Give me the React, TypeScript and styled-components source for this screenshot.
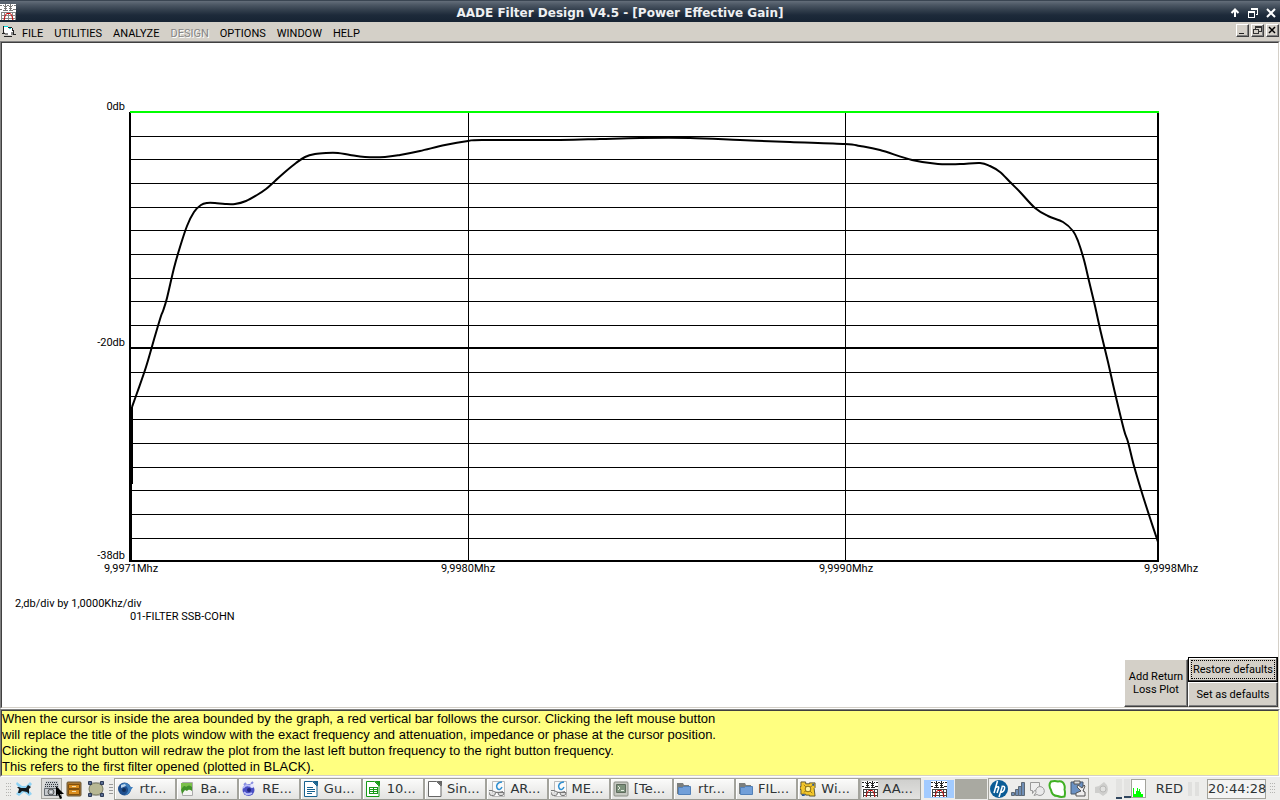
import React from 'react';
import styled, { createGlobalStyle, css } from 'styled-components';

const Global = createGlobalStyle`
  *, *::before, *::after { box-sizing: border-box; }
  html, body { margin: 0; padding: 0; }
  body { background: #d4d0c8; color: #000; font-family: Roboto, "Liberation Sans", sans-serif; font-size: 11px; line-height: 13px; }
  button { font: inherit; color: inherit; margin: 0; padding: 0; border: 0; background: none; border-radius: 0; }
  svg { display: block; flex: none; }
`;

const Desktop = styled.div`
  display: flex;
  flex-direction: column;
  min-height: 100vh;
`;

const TitleBar = styled.header`
  display: grid;
  grid-template-columns: 16px 1fr 56px;
  align-items: center;
  height: 22px;
  border-top: 1px solid #3a4552;
  background: linear-gradient(#646e7a 0, #4b5663 4px, #333f4d 9px, #1d2a3a 14px, #172434 20px);
`;

const Title = styled.h1`
  margin: 0;
  padding-top: 3px;
  text-align: center;
  font: bold 12px/16px "DejaVu Sans", sans-serif;
  color: #eef0f2;
  white-space: nowrap;
  overflow: hidden;
`;

const FrameControls = styled.div`
  display: flex;
  justify-content: flex-end;
  gap: 2px;
  padding: 2px 1px 0 0;
`;

const FrameButton = styled.button`
  display: grid;
  place-items: center;
  width: 16px;
  height: 16px;
`;

const MenuBar = styled.nav`
  display: flex;
  align-items: center;
  height: 19px;
  padding-left: 2px;
  background: #d4d0c8;
`;

const MenuList = styled.div`
  display: flex;
  flex: 1;
  gap: 11px;
  padding: 4px 0 0 5px;
`;

const MenuButton = styled.button`
  white-space: nowrap;
  &:disabled {
    color: #868686;
    text-shadow: 1px 1px #fff;
  }
`;

const ChildControls = styled.div`
  display: flex;
  gap: 2px;
  padding: 0 1px 2px 0;
`;

const raised = css`
  background: #d4d0c8;
  border: 1px solid;
  border-color: #fff #404040 #404040 #fff;
  box-shadow: inset -1px -1px #808080;
`;

const ChildButton = styled.button`
  ${raised}
  display: grid;
  place-items: center;
  width: 13px;
  height: 13px;
`;

const Sunken = styled.section`
  border: 1px solid;
  border-color: #808080 #fff #fff #808080;
`;

const PlotFrame = styled(Sunken)`
  display: flex;
  flex: 1;
`;

const PlotPane = styled.div`
  display: flex;
  flex-direction: column;
  justify-content: space-between;
  flex: 1;
  min-width: 0;
  border: 1px solid;
  border-color: #404040 #d4d0c8 #d4d0c8 #404040;
  background: #fff;
`;

const Chart = styled.svg`
  width: 100%;
  height: auto;
  font-family: Roboto, "Liberation Sans", sans-serif;
  font-size: 11px;
`;

const PlotActions = styled.div`
  display: flex;
  justify-content: flex-end;
  align-items: flex-end;
`;

const ActionStack = styled.div`
  display: flex;
  flex-direction: column;
  width: 90px;
`;

const ActionButton = styled.button<{ $wide?: boolean; $focused?: boolean }>`
  ${raised}
  display: grid;
  place-items: center;
  width: ${p => (p.$wide ? 'auto' : '64px')};
  height: ${p => (p.$wide ? 25 : 48)}px;
  ${p => p.$focused && css`
    border-color: #000;
    box-shadow: inset -1px -1px #404040, inset 1px 1px #fff;
    outline: 1px dotted #000;
    outline-offset: -4px;
  `}
`;

const Hint = styled.p`
  margin: 0;
  min-height: 66px;
  border: 1px solid;
  border-color: #404040 #d4d0c8 #d4d0c8 #404040;
  background: #ffff80;
  font: 13px/16px "Liberation Sans", sans-serif;
`;

const HintLine = styled.span`
  display: block;
`;

const Taskbar = styled.footer`
  display: flex;
  align-items: center;
  height: 23px;
  background: #ededeb;
  font: 13px/16px "DejaVu Sans", sans-serif;
  color: #2e3436;
`;

const Launchers = styled.div`
  display: flex;
  align-items: center;
  gap: 2px;
  width: 114px;
  padding-left: 6px;
`;

const Launcher = styled.button<{ $active?: boolean }>`
  display: grid;
  place-items: center;
  width: 21px;
  height: 21px;
  background: ${p => (p.$active ? '#dcdcda' : 'transparent')};
  box-shadow: ${p => (p.$active ? 'inset 0 0 0 1px #a5a5a0' : 'none')};
`;

const LaunchPair = styled.div`
  position: relative;
  margin-left: 5px;
`;

const Pointer = styled.svg`
  position: absolute;
  left: 15px;
  top: 8px;
  z-index: 1;
`;

const Tasks = styled.div`
  display: grid;
  grid-template-columns: repeat(13, 1fr);
  flex: 1;
  min-width: 0;
`;

const Task = styled.button<{ $active?: boolean }>`
  display: flex;
  align-items: center;
  gap: 2px;
  min-width: 0;
  height: 22px;
  padding: 0 4px 0 2px;
  overflow: hidden;
  white-space: nowrap;
  border: 1px solid;
  border-color: #a3a39c #a3a39c #999992 #a3a39c;
  box-shadow: inset 1px 1px ${p => (p.$active ? '#bcbcb8' : '#fff')};
  background: ${p => (p.$active ? 'linear-gradient(#cfcfcd, #e2e2e0)' : 'linear-gradient(#fbfbfa, #e3e3e1)')};
`;

const TaskLabel = styled.span`
  flex: 1;
  text-align: center;
`;

const Pager = styled.div`
  display: flex;
  height: 18px;
  margin: 0 0 0 2px;
`;

const Desk = styled.button<{ $current?: boolean }>`
  display: grid;
  place-items: center;
  width: 32px;
  height: 20px;
  margin-top: -1px;
  border: 1px solid ${p => (p.$current ? '#ededeb' : '#a9a9a1')};
  background: ${p => (p.$current ? '#a2cbff' : '#a9a9a1')};
`;

const Tray = styled.div`
  display: flex;
  align-items: center;
  gap: 2px;
  width: 101px;
  height: 22px;
  margin-left: 1px;
  padding-left: 1px;
  border: 1px solid #a3a39c;
`;

const Monitors = styled.div`
  display: flex;
  align-items: center;
  gap: 6px;
  padding-left: 5px;
`;

const KeyLabel = styled.span`
  padding: 0 4px 0 10px;
`;

const Clock = styled.time`
  display: grid;
  place-items: center;
  width: 59px;
  height: 20px;
  border: 1px solid #a3a39c;
  background: #f4f4f3;
  white-space: nowrap;
`;

/* Shared small drawings */

const FilterIcon = ({ faded }: { faded?: boolean }) => (
  <svg width="16" height="16" viewBox="0 0 16 16" shapeRendering="crispEdges" aria-hidden="true">
    <path fill="#fff" d="M0 0h16v16H0z" />
    <path
      stroke={faded ? '#777' : '#222'}
      fill="none"
      d="M0 1.500h2M3 1.500h1M7 1.500h2M12 1.500h1M14 1.500h2M5.500 0v7M10.500 0v7M4 2.500h3M9 2.500h3M4 4.500h3M9 4.500h3M0 5.500h2M13 5.500h3M3 6.500h5M9 6.500h4"
    />
    <path stroke={faded ? '#888' : '#444'} fill="none" d="M1 8.500h15M1 11.500h15M1 14.500h15M1.500 8v8M4.500 8v8M8.500 8v8M12.500 8v8M15.500 8v8" />
    <path stroke="#d00000" fill="none" shapeRendering="auto" d="M4 16c1-3 1-6 3-6.500h3c2 .5 2 3.500 3 6.500" />
  </svg>
);

const PageIcon = ({ color, mark }: { color: string; mark?: string }) => (
  <svg width="16" height="16" viewBox="0 0 16 16" aria-hidden="true">
    <path d="M1.500 .5h8L14 5v10.500H1.500z" fill="#fff" stroke={color} />
    <path d="M9.500 0H15v5.500z" fill={color} />
    {mark && <path d={mark} stroke={color} strokeWidth="1" fill="none" shapeRendering="crispEdges" />}
  </svg>
);

const FolderIcon = () => (
  <svg width="16" height="16" viewBox="0 0 16 16" aria-hidden="true">
    <path d="M1 13V2h6l1 2h5v8z" fill="#7b7e7d" />
    <path d="M2.500 6.500h4l1-1h7v8h-12z" fill="#729fd8" stroke="#5280b8" />
  </svg>
);

const ReaderIcon = () => (
  <svg width="16" height="16" viewBox="0 0 16 16" aria-hidden="true">
    <path d="M3.500 .5h12v15h-12z" fill="#fafafa" stroke="#bbb" />
    <path d="M13 1c-5 0-6 4-5 6 2 3 4 1 5-1" fill="none" stroke="#2f8fd0" strokeWidth="1.500" />
    <path d="M0 9.500h3l4 2h3l4-1M.5 11.500v1q0 2 2 2h2q2 0 2-3M9 11.500q0 3 2 3h2q2 0 2-3z" fill="#ddd" stroke="#777" />
  </svg>
);

const RtrIcon = () => (
  <svg width="16" height="16" viewBox="0 0 16 16" aria-hidden="true">
    <circle cx="7.500" cy="8" r="6.500" fill="#1f4f8e" />
    <path d="M3 4q6-4 9 0l1 2 3 0-2 3q-2 5-6 5 5-4 2-8-3-3-7-2z" fill="#3f7fbd" />
    <path d="M4 4l4-1 1 2-5 2z" fill="#bcd6ee" />
    <circle cx="7" cy="9" r="2" fill="#12305a" />
  </svg>
);

const ImageIcon = () => (
  <svg width="16" height="16" viewBox="0 0 16 16" aria-hidden="true">
    <path d="M3.500 1.500h10v13h-10z" fill="#f4f4f2" stroke="#aaa" />
    <path d="M2 2h11v7H2z" fill="#7cc04c" />
    <path d="M2 9q3-6 5-3 3-3 6 0v4l-3-2-2 2-2-1-3 4z" fill="#42932a" />
  </svg>
);

const RadioactiveIcon = () => (
  <svg width="16" height="16" viewBox="0 0 16 16" aria-hidden="true">
    <circle cx="7.500" cy="9" r="6" fill="#4a4fc4" />
    <path d="M2 7q3-4 7-2M3 11q3 4 8 1" stroke="#b9befa" strokeWidth="2" fill="none" />
    <path d="M3 4l2-2M10 3l2-2" stroke="#8a8fe0" strokeWidth="2" />
    <circle cx="8" cy="9" r="2" fill="#20247e" />
    <circle cx="11" cy="5" r="2" fill="#e4e6ff" />
  </svg>
);

const TerminalIcon = () => (
  <svg width="16" height="16" viewBox="0 0 16 16" aria-hidden="true">
    <rect x="1" y="1" width="14" height="14" rx="1" fill="#c7c9c2" stroke="#8a8d85" />
    <path d="M3.500 3.500h9v8h-9z" fill="#7d927c" stroke="#5e6b5c" />
    <path d="M5 5l2 2-2 2M8 9.500h3" fill="none" stroke="#e8f0e2" />
  </svg>
);

const WineIcon = () => (
  <svg width="16" height="16" viewBox="0 0 17 17" aria-hidden="true">
    <path d="M1 1h5v2h4V2l6 0v5l-1 1 1 8h-6v-1H6v-1H1V9H0V6h1z" fill="#f4c72b" stroke="#5a5330" />
    <path d="M4 4l3 3M13 5l-3 2M4 12l3-2M13 13l-3-3" stroke="#9c7a12" />
    <circle cx="8.500" cy="8.500" r="3" fill="#fff2a0" stroke="#7c6410" />
    <path d="M2 15h3M14 3v2" stroke="#29579b" strokeWidth="2" />
  </svg>
);

const Grip = ({ rows }: { rows?: boolean }) => (
  <svg width="6" height="14" viewBox="0 0 6 14" shapeRendering="crispEdges" aria-hidden="true">
    <path
      d={rows ? 'M1 2.500h4M1 5.500h4M1 8.500h4M1 11.500h4' : 'M0 1.500h6M0 4.500h6M0 7.500h6M0 10.500h6M0 13.500h6'}
      stroke={rows ? '#999' : '#b5b5b2'}
      strokeDasharray={rows ? undefined : '1 1'}
    />
  </svg>
);

/* Plot data */

type Point = [number, number];

const GRID_ROWS = [136, 159, 183, 207, 230, 254, 278, 301, 325, 372, 396, 419, 443, 467, 490, 514, 538];
const GRID_COLUMNS = [468, 845];
const RESPONSE: Point[] = [
  [132, 407], [137, 393], [146, 367], [155, 336], [161, 316], [163, 311], [167, 298], [174, 268],
  [180, 247], [187, 226], [194, 212], [201, 205], [207, 203], [215, 203], [225, 204], [235, 204],
  [246, 201], [257, 195], [266, 189], [275, 181], [285, 172], [296, 163], [305, 157],
  [315, 154], [326, 153], [338, 153], [350, 155], [365, 157], [385, 157], [400, 155], [420, 151], [445, 145],
  [468, 141], [482, 140], [560, 140], [600, 139], [640, 138], [690, 138], [740, 140], [790, 142], [845, 144],
  [860, 146], [880, 150], [912, 160], [938, 164], [960, 164], [980, 163], [990, 166], [1000, 172],
  [1010, 182], [1020, 192], [1035, 208], [1048, 216], [1063, 222], [1073, 231],
  [1078, 241], [1084, 260], [1089, 281], [1095, 306], [1101, 333], [1108, 362], [1115, 393], [1124, 430],
  [1128, 442], [1134, 466], [1142, 493], [1150, 518], [1158, 542],
];
const Y_LABELS = [['0db', 110], ['-20db', 346], ['-38db', 559]] as const;
const X_LABELS = [['9,9971Mhz', 131], ['9,9980Mhz', 468], ['9,9990Mhz', 846], ['9,9998Mhz', 1171]] as const;

/* Joins the samples with Catmull-Rom segments written as cubic curves. */
const smoothPath = (pts: Point[]) =>
  pts.slice(1).reduce((d, p, i) => {
    const a = pts[Math.max(i - 1, 0)];
    const b = pts[i];
    const n = pts[Math.min(i + 2, pts.length - 1)];
    return `${d}C${b[0] + (p[0] - a[0]) / 6} ${b[1] + (p[1] - a[1]) / 6} ${p[0] - (n[0] - b[0]) / 6} ${p[1] - (n[1] - b[1]) / 6} ${p[0]} ${p[1]}`;
  }, `M${pts[0][0]} ${pts[0][1]}`);

const GainPlot = () => (
  <Chart viewBox="2 43 1276 584" role="img" aria-label="Power effective gain">
    <g stroke="#000" fill="none" shapeRendering="crispEdges">
      {GRID_ROWS.map(y => <path key={y} d={`M130 ${y}.5H1158`} />)}
      {GRID_COLUMNS.map(x => <path key={x} d={`M${x}.5 112V561`} />)}
      <path strokeWidth="2" d="M130 348H1158M130 112V561H1158V112M132 407V484" />
      <path d="M131.500 484V561" />
      <path strokeWidth="2" stroke="#00ff00" d="M130 112H1159" />
    </g>
    <path d={smoothPath(RESPONSE)} fill="none" stroke="#000" strokeWidth="2" />
    {Y_LABELS.map(([label, y]) => <text key={label} x="125" y={y} textAnchor="end">{label}</text>)}
    {X_LABELS.map(([label, x]) => <text key={label} x={x} y="572" textAnchor="middle">{label}</text>)}
    <text x="15" y="607">2,db/div by 1,0000Khz/div</text>
    <text x="130" y="620">01-FILTER SSB-COHN</text>
  </Chart>
);

const MENUS = ['FILE', 'UTILITIES', 'ANALYZE', 'DESIGN', 'OPTIONS', 'WINDOW', 'HELP'];

const TASKS: { label: string; icon: React.ReactNode; active?: boolean }[] = [
  { label: 'rtr...', icon: <RtrIcon /> },
  { label: 'Ba...', icon: <ImageIcon /> },
  { label: 'RE...', icon: <RadioactiveIcon /> },
  { label: 'Gu...', icon: <PageIcon color="#17628f" mark="M4 6.500h6M4 8.500h8M4 10.500h8M4 12.500h5" /> },
  { label: '10...', icon: <PageIcon color="#189a18" mark="M4.500 6.500h8v6h-8zM4 8.500h8M4 10.500h8M8.500 6v7" /> },
  { label: 'Sin...', icon: <PageIcon color="#666" /> },
  { label: 'AR...', icon: <ReaderIcon /> },
  { label: 'ME...', icon: <ReaderIcon /> },
  { label: '[Te...', icon: <TerminalIcon /> },
  { label: 'rtr...', icon: <FolderIcon /> },
  { label: 'FIL...', icon: <FolderIcon /> },
  { label: 'Wi...', icon: <WineIcon /> },
  { label: 'AA...', icon: <FilterIcon />, active: true },
];

export default function App() {
  return (
    <Desktop>
      <Global />
      <TitleBar>
        <FilterIcon faded />
        <Title>AADE Filter Design V4.5 - [Power Effective Gain]</Title>
        <FrameControls>
          <FrameButton aria-label="Shade">
            <svg width="10" height="10" viewBox="0 0 10 10"><path d="M5 9V2M1.500 5L5 1.500 8.500 5" fill="none" stroke="#fff" strokeWidth="2" /></svg>
          </FrameButton>
          <FrameButton aria-label="Restore">
            <svg width="10" height="10" viewBox="0 0 10 10" shapeRendering="crispEdges"><path d="M3 1h6.500v5H8M.5 4v5.500h6V4" fill="none" stroke="#fff" /><path d="M3 0h7v1H3zM0 3h7v2H0z" fill="#fff" /></svg>
          </FrameButton>
          <FrameButton aria-label="Close">
            <svg width="10" height="10" viewBox="0 0 10 10"><path d="M1 1l8 8M9 1L1 9" stroke="#fff" strokeWidth="2" /></svg>
          </FrameButton>
        </FrameControls>
      </TitleBar>

      <MenuBar>
        <svg width="15" height="15" viewBox="0 0 15 15" shapeRendering="crispEdges" aria-hidden="true">
          <path d="M2 3h7l3 4v4H5L2 8z" fill="#fff" />
          <path d="M1 2h5v1H1zM7 4h2v1H7z" fill="#00e0e0" />
          <path d="M1.500 2v7M6 3.500h4M10.500 4v3M11.500 6v4M2 12.500h8M11 10.500h3M0 9.500h3" stroke="#222" />
          <path d="M3 9h3v2H3zM9 8h2v3H9z" fill="#888" />
        </svg>
        <MenuList>
          {MENUS.map(m => <MenuButton key={m} disabled={m === 'DESIGN'}>{m}</MenuButton>)}
        </MenuList>
        <ChildControls>
          <ChildButton aria-label="Minimize plot">
            <svg width="9" height="9" viewBox="0 0 9 9"><path d="M1 7h5v1H1z" fill="#222" /></svg>
          </ChildButton>
          <ChildButton aria-label="Restore plot">
            <svg width="9" height="9" viewBox="0 0 9 9" shapeRendering="crispEdges"><path d="M2.500 3V.5h6v5H6M.5 3.500h5v4h-5zM2 1.500h6" fill="none" stroke="#333" /></svg>
          </ChildButton>
          <ChildButton aria-label="Close plot">
            <svg width="9" height="9" viewBox="0 0 9 9"><path d="M1 1l6 6M7 1L1 7" stroke="#000" strokeWidth="1.500" /></svg>
          </ChildButton>
        </ChildControls>
      </MenuBar>

      <PlotFrame>
        <PlotPane>
          <GainPlot />
          <PlotActions>
            <ActionButton>Add Return<br />Loss Plot</ActionButton>
            <ActionStack>
              <ActionButton $wide $focused>Restore defaults</ActionButton>
              <ActionButton $wide>Set as defaults</ActionButton>
            </ActionStack>
          </PlotActions>
        </PlotPane>
      </PlotFrame>

      <Sunken>
        <Hint>
          <HintLine>When the cursor is inside the area bounded by the graph, a red vertical bar follows the cursor. Clicking the left mouse button</HintLine>
          <HintLine>will replace the title of the plots window with the exact frequency and attenuation, impedance or phase at the cursor position.</HintLine>
          <HintLine>Clicking the right button will redraw the plot from the last left button frequency to the right button frequency.</HintLine>
          <HintLine>This refers to the first filter opened (plotted in BLACK).</HintLine>
        </Hint>
      </Sunken>

      <Taskbar>
        <Launchers>
          <Grip />
          <Launcher aria-label="Applications">
            <svg width="16" height="16" viewBox="0 0 16 16">
              <path d="M1 1l5 4h4l4-4 2 2-4 5 4 5-3 2-5-4-5 4-3-2 4-5-4-5z" fill="#8fd2f4" />
              <path d="M1 6l2 0 2 1h5l2-3 3 2-2 2v5l-2-2-5-1-2 2-2 0 1-4z" fill="#15191c" />
            </svg>
          </Launcher>
          <LaunchPair>
            <Launcher $active aria-label="Show desktop">
              <svg width="17" height="17" viewBox="0 0 17 17">
                <path d="M3 1h12l1 5v10H1V8z" fill="#c4c8cc" />
                <path d="M3 2.500h12M2 4.500h13M2 6.500h13" stroke="#30363c" strokeDasharray="1 1" />
                <path d="M1.500 8.500h14v7h-14z" fill="none" stroke="#666c72" />
                <circle cx="8" cy="12" r="3" fill="#aeb4ba" stroke="#555" />
                <circle cx="8" cy="12" r="1" fill="#eee" />
              </svg>
            </Launcher>
            <Pointer width="11" height="15" viewBox="0 0 11 15" aria-hidden="true"><path d="M0 0v10l2-2 2 5 2-1-2-4h4z" fill="#000" /></Pointer>
          </LaunchPair>
          <Launcher aria-label="Files">
            <svg width="16" height="16" viewBox="0 0 16 16">
              <rect x="1" y="1" width="14" height="14" rx="1" fill="#a8752e" stroke="#6b5838" />
              <path d="M2.500 3.500h11v4h-11zM2.500 8.500h11v5h-11z" fill="#d98c1e" stroke="#80500e" />
              <path d="M6 5.500h4M6 10.500h4" stroke="#f5dfaa" />
            </svg>
          </Launcher>
          <Launcher aria-label="Draw">
            <svg width="16" height="16" viewBox="0 0 16 16">
              <path d="M2 2h12v12H2z" fill="none" stroke="#888" />
              <ellipse cx="8" cy="8" rx="7" ry="6" fill="#b8b894" stroke="#7d7f64" />
              <path d="M.5 .5h3v3h-3zM12.500 .5h3v3h-3zM.5 12.500h3v3h-3zM12.500 12.500h3v3h-3z" fill="#5b6f94" stroke="#2d3b58" />
            </svg>
          </Launcher>
          <Grip rows />
        </Launchers>

        <Tasks>
          {TASKS.map((t, i) => (
            <Task key={i} $active={t.active}>
              {t.icon}
              <TaskLabel>{t.label}</TaskLabel>
            </Task>
          ))}
        </Tasks>

        <Pager>
          <Desk $current aria-label="Workspace 1"><FilterIcon /></Desk>
          <Desk aria-label="Workspace 2" />
        </Pager>

        <Tray>
          <svg width="18" height="18" viewBox="0 0 18 18" aria-label="hp">
            <circle cx="9" cy="9" r="9" fill="#0a5c96" />
            <path d="M7.500 1L4 13M5.500 7.500q4-2 3 1L7 13M12.500 6L9 17M11.500 6.500q4-1 3 2.500t-4.500 3.500" fill="none" stroke="#fff" strokeWidth="1.500" />
          </svg>
          <svg width="17" height="16" viewBox="0 0 17 16" aria-hidden="true">
            <path d="M1.500 11.500h3v3h-3zM5.500 8.500h3v6h-3zM8.500 5.500h3v9h-3zM11.500 1.500h3v13h-3z" fill="#6f8eb5" stroke="#5d6874" />
          </svg>
          <svg width="17" height="16" viewBox="0 0 17 16" aria-hidden="true">
            <path d="M1.500 1.500h9v8h-5l-2 3v-3h-2z" fill="#eee" stroke="#999" />
            <path d="M11 5.500a4.500 4.500 0 1 1-3 8l-3 1 2-3a4.500 4.500 0 0 1 4-6z" fill="#eaeaea" stroke="#999" />
          </svg>
          <svg width="19" height="18" viewBox="0 0 19 18" aria-hidden="true">
            <path d="M3 1.500q4-1 7 0 5-1 6.500 4 .5 2 0 4 1 3 0 7-4 1-7-.5Q4 16 3 10 0 5 3 1.500z" fill="#fff" stroke="#3fb023" strokeWidth="2" />
          </svg>
          <svg width="17" height="17" viewBox="0 0 17 17" aria-hidden="true">
            <path d="M2 2h12v12H2z" fill="#6a91c3" stroke="#46566a" />
            <path d="M5 1h6v3H5z" fill="#ddd" stroke="#555" />
            <path d="M9 5l4 3 2-3 1 1-2 5 2 1v4H7v-3l5-2-4-4z" fill="#eee" stroke="#555" />
          </svg>
        </Tray>

        <Monitors>
          <svg width="16" height="16" viewBox="0 0 16 16" aria-hidden="true">
            <path d="M1 6l4-1 5-4q6 5 3 11l-4 3-4-3H1z" fill="#cfcfcd" />
            <circle cx="9" cy="8" r="3" fill="#e2e2e0" stroke="#b8b8b6" />
          </svg>
          <svg width="30" height="20" viewBox="0 0 30 20" shapeRendering="crispEdges" aria-hidden="true">
            <path d="M0 0h6v20H0zM8 0h6v20H8z" fill="#e3e3e1" />
            <path d="M0 18h6v2H0zM8 17h7v2H8z" fill="#30475f" />
            <path d="M15.500 .5h14v18h-14z" fill="#fff" stroke="#a3a39c" />
            <path d="M17 18V9h1v6h2v-3h1v-3h1v3h1v-2h1v3h1v2h2v3z" fill="#0f0" />
          </svg>
        </Monitors>
        <KeyLabel>RED</KeyLabel>
        <svg width="20" height="14" viewBox="0 0 20 14" aria-hidden="true">
          <path d="M1 0h4v14H1zM8 0h4v14H8z" fill="#e0e0de" />
        </svg>
        <Clock>20:44:28</Clock>
        <svg width="14" height="14" viewBox="0 0 14 14" shapeRendering="crispEdges" aria-hidden="true">
          <path d="M4 1.500h6M4 4.500h6M4 7.500h6M4 10.500h6" stroke="#b5b5b2" strokeDasharray="1 1" />
        </svg>
      </Taskbar>
    </Desktop>
  );
}
